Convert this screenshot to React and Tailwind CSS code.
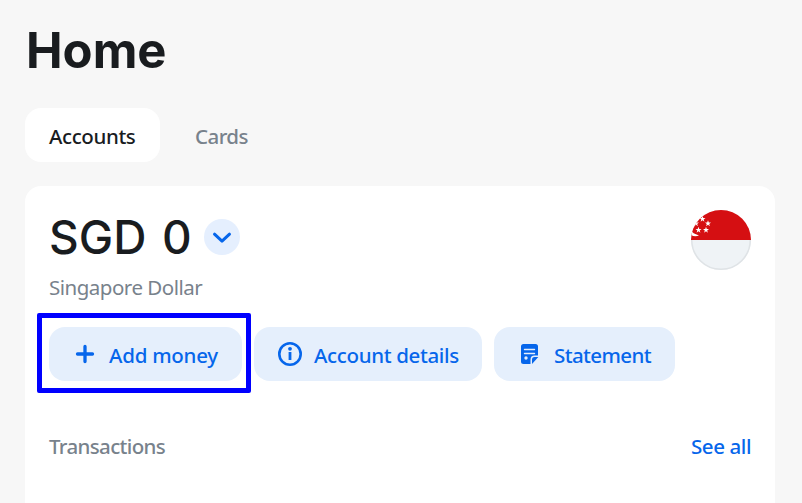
function Star({ x, y }) {
  return (
    <path
      transform={`translate(${x} ${y})`}
      fill="#fff"
      d="M0-3.2.8-1H3L1.2.4 1.9 2.7 0 1.3-1.9 2.7-1.2.4-3-1H-.8Z"
    />
  );
}

function Flag() {
  return (
    <svg className="h-[60px] w-[60px] shrink-0" viewBox="0 0 60 60">
      <defs>
        <clipPath id="flag">
          <circle cx="30" cy="30" r="30" />
        </clipPath>
      </defs>
      <g clipPath="url(#flag)">
        <rect width="60" height="60" fill="#eff3f6" />
        <rect width="60" height="30" fill="#d50f12" />
        <path d="M0 20C1 22.500 3.500 24 8 25.500C5.500 26.500 2.500 26.500 0 25Z" fill="#fff" />
        <Star x={11.5} y={9} />
        <Star x={17} y={13.500} />
        <Star x={7.500} y={20} />
        <Star x={15} y={20} />
        <Star x={5} y={13.500} />
      </g>
      <path d="M.75 30a29.250 29.250 0 0 0 58.500 0" fill="none" stroke="#dfe3e6" strokeWidth="1.500" />
    </svg>
  );
}

const label = "whitespace-nowrap text-[20.5px] leading-[28px] font-medium";

function Action({ width, icon, tracking, children }) {
  return (
    <button className={`flex h-[54px] shrink-0 items-center rounded-2xl bg-[#e5effc] pl-6 text-[#0666eb] ${width}`}>
      <span className="mr-3 h-6 w-6 shrink-0">{icon}</span>
      <span className={`${label} mt-px ${tracking}`}>{children}</span>
    </button>
  );
}

export default function App() {
  return (
    <main className="flex h-[503px] w-[802px] flex-col overflow-hidden bg-[#f7f7f7] px-[25px] pt-5 font-['Noto_Sans',sans-serif] text-[#191c1f]">
      <h1 className="h-[88px] shrink-0 pl-px font-['Inter',sans-serif] text-[49px] leading-[62px] font-[650]">Home</h1>
      <nav className="flex h-[54px] shrink-0">
        <div className="flex w-[135px] items-center rounded-2xl bg-white pl-6">
          <span className={`${label} mt-px tracking-[-0.4px]`}>Accounts</span>
        </div>
        <div className="flex items-center pl-[35px] text-[#78828c]">
          <span className={`${label} mt-px tracking-[-0.55px]`}>Cards</span>
        </div>
      </nav>
      <section className="mt-6 h-[340px] w-[750px] shrink-0 rounded-t-2xl bg-white px-6 pt-6">
        <div className="flex h-[93px] justify-between">
          <div>
            <div className="flex h-[54px] items-center">
              <h2 className="w-[155px] whitespace-nowrap font-['Inter',sans-serif] text-[46px] leading-[54px] font-medium tracking-[0.1px] [word-spacing:3px]">SGD 0</h2>
              <button className="flex h-9 w-9 items-center justify-center rounded-full bg-[#e5effe]">
                <svg className="h-6 w-6" viewBox="0 0 24 24" fill="none" stroke="#0666eb" strokeWidth="3" strokeLinecap="round" strokeLinejoin="round">
                  <path d="m4.500 9.200 7.500 7 7.500-7" />
                </svg>
              </button>
            </div>
            <p className="mt-[9px] whitespace-nowrap text-[20.5px] leading-[28px] tracking-[-0.5px] text-[#78828c]">Singapore Dollar</p>
          </div>
          <Flag />
        </div>
        <div className="mt-6 flex h-[54px] gap-3">
          <div className="relative">
            <Action
              width="w-[193px]"
              tracking="tracking-[-0.25px]"
              icon={
                <svg viewBox="0 0 24 24" stroke="currentColor" strokeWidth="3.300" strokeLinecap="round">
                  <path d="M12 4.500v15M4.500 12h15" />
                </svg>
              }
            >
              Add money
            </Action>
            <div className="pointer-events-none absolute -top-[14px] -left-3 h-20 w-[214px] rounded-[2px] border-[5px] border-[#0000ff]" />
          </div>
          <Action
            width="w-[228px]"
            tracking="tracking-[-0.35px]"
            icon={
              <svg viewBox="0 0 24 24" fill="none" stroke="currentColor" strokeWidth="2.600">
                <circle cx="12" cy="12" r="10.700" />
                <path d="M12 10v8" strokeWidth="2.800" />
                <circle cx="12" cy="6.800" r="1.900" fill="currentColor" stroke="none" />
              </svg>
            }
          >
            Account details
          </Action>
          <Action
            width="w-[181px]"
            tracking="tracking-[-0.6px]"
            icon={
              <svg viewBox="0 0 24 24">
                <path fill="currentColor" d="M5.500 2h12a2.500 2.500 0 0 1 2.500 2.500v9h-3.500a4 4 0 0 0-4 4V22h-7A2.500 2.500 0 0 1 3 19.500v-15A2.500 2.500 0 0 1 5.500 2Z" />
                <path fill="currentColor" d="M14 22v-4.500a2.500 2.500 0 0 1 2.500-2.500h3.800Z" />
                <path d="M6.500 7.500h10M6.500 11.500h10" stroke="#e5effc" strokeWidth="1.400" strokeLinecap="round" />
                <circle cx="8" cy="16" r="1.700" fill="#e5effc" />
              </svg>
            }
          >
            Statement
          </Action>
        </div>
        <div className="mt-[51px] flex justify-between">
          <h3 className={`${label} tracking-[-0.65px] text-[#78828c]`}>Transactions</h3>
          <a className={`${label} w-[60px] tracking-[-0.4px] text-[#0666eb]`}>See all</a>
        </div>
      </section>
    </main>
  );
}
